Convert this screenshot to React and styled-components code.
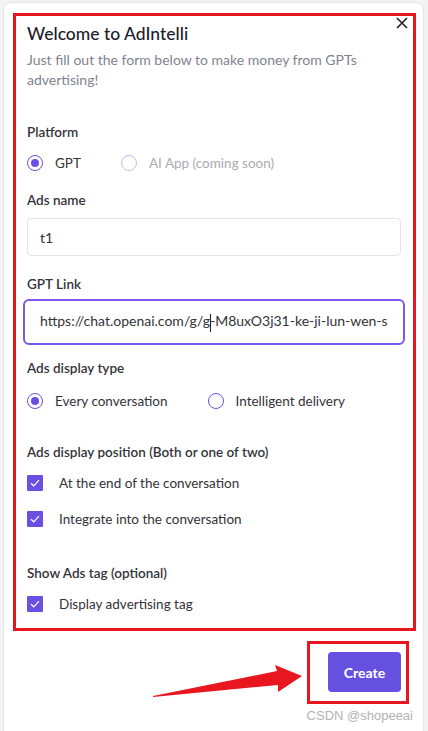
import React from 'react'
import styled, { createGlobalStyle } from 'styled-components'

const Global = createGlobalStyle`
  body{ margin:0; background:#f3f3f4; font-family: Lato, "Liberation Sans", sans-serif; }
`

const PURPLE = '#6a4fe3'
const RED = '#e8161e'

const Card = styled.div`
  margin:2px 4px 0 3px;
  min-height:740px;
  background:#fff;
  border:1px solid #e6e6e8;
  border-radius:8px;
  padding:10px 7px 0 9px;
  box-sizing:border-box;
`

const Marked = styled.div`
  position:relative;
  border:3px solid ${RED};
  padding:4px 12px 14px 11px;
`

const Close = styled.button`
  position:absolute;top:1px;right:3px;
  border:none;background:none;padding:0;cursor:pointer;
  width:14px;height:14px;display:flex;
`

const Title = styled.h1`
  margin:0 0 2px;font-size:17.5px;line-height:28px;font-weight:500;color:#1c1c2b;
`
const Sub = styled.p`
  margin:0 0 32px;font-size:14px;line-height:20px;color:#80838f;
`

const Label = styled.div`
  font-size:13.5px;line-height:20px;font-weight:600;color:#34343a;
  margin-top:${p=>p.$top||0}px;
`

const Row = styled.div`
  display:flex;align-items:center;gap:40px;
  margin-top:${p=>p.$top||11}px;
`

const Option = styled.label`
  display:flex;align-items:center;gap:12px;
  font-size:13.5px;line-height:20px;
  color:${p=>p.$disabled?'#ababb0':'#333338'};
`

const Radio = styled.span`
  width:16px;height:16px;border-radius:50%;box-sizing:border-box;
  border:1.5px solid ${p=>p.$disabled?'#c9b8f7':PURPLE};
  display:flex;align-items:center;justify-content:center;
  &::after{
    content:'';width:8px;height:8px;border-radius:50%;
    background:${p=>p.$on?PURPLE:'transparent'};
  }
`

const Input = styled.div`
  margin-top:8px;height:38px;box-sizing:border-box;
  border:1px solid #e4e4e7;border-radius:4px;
  padding:0 12px;display:flex;align-items:center;
  font-size:14px;color:#333338;
`

const FocusInput = styled.div`
  margin:5px -4px 0;height:46px;box-sizing:border-box;
  border:2px solid #7a58f0;border-radius:6px;
  padding:0 15px;display:flex;align-items:center;
  font-size:14px;color:#333338;
`

const Clip = styled.span`
  flex:1;white-space:nowrap;overflow:hidden;
`

const Caret = styled.span`
  display:inline-block;width:1px;height:18px;background:#222;
  vertical-align:middle;margin:0 -1px 0 0;
`

const Check = styled.span`
  width:16px;height:16px;background:${PURPLE};border-radius:1px;
  display:flex;align-items:center;justify-content:center;flex:none;
`

const CheckRow = styled.label`
  display:flex;align-items:center;gap:16px;
  font-size:13.5px;line-height:20px;color:#333338;
  margin-top:${p=>p.$top||11}px;
`

const Footer = styled.div`
  display:flex;justify-content:flex-end;align-items:stretch;
  margin-top:10px;padding-right:7px;
`

const ButtonMark = styled.div`
  border:3px solid ${RED};
  padding:8px 5px 9px 18px;
`

const Create = styled.button`
  width:73px;height:40px;border:none;border-radius:4px;
  background:#6650e0;color:#fff;font-family:inherit;
  font-size:14px;font-weight:700;cursor:pointer;
`

const Watermark = styled.div`
  text-align:right;font-family:"Liberation Sans", sans-serif;
  font-size:13px;line-height:18px;color:#b3b3b3;margin-top:3px;padding-right:3px;
`

const Arrow = () => (
  <svg width="150" height="63" viewBox="0 0 150 63" style={{marginRight:4}}>
    <polygon points="0,55 124,30 122,24 149,35 125,51 125,44 0,56" fill={RED}/>
  </svg>
)

const Tick = () => (
  <svg width="10" height="8" viewBox="0 0 10 8">
    <path d="M1 4.2 L3.8 6.8 L9 1.2" fill="none" stroke="#fff" strokeWidth="1.2"/>
  </svg>
)

export default function App(){
  return (
    <>
      <Global/>
      <Card>
        <Marked>
          <Close aria-label="close">
            <svg width="12" height="12" viewBox="0 0 12 12">
              <path d="M1 1L11 11M11 1L1 11" stroke="#1f1f2a" strokeWidth="1.6"/>
            </svg>
          </Close>
          <Title>Welcome to AdIntelli</Title>
          <Sub>Just fill out the form below to make money from GPTs advertising!</Sub>

          <Label>Platform</Label>
          <Row>
            <Option><Radio $on/>GPT</Option>
            <Option $disabled><Radio $disabled/>AI App (coming soon)</Option>
          </Row>

          <Label $top={17}>Ads name</Label>
          <Input>t1</Input>

          <Label $top={18}>GPT Link</Label>
          <FocusInput>
            <Clip>https://chat.openai.com/g/g<Caret/>-M8uxO3j31-ke-ji-lun-wen-shu-xie</Clip>
          </FocusInput>

          <Label $top={13}>Ads display type</Label>
          <Row $top={13}>
            <Option><Radio $on/>Every conversation</Option>
            <Option><Radio/>Intelligent delivery</Option>
          </Row>

          <Label $top={31}>Ads display position (Both or one of two)</Label>
          <CheckRow><Check><Tick/></Check>At the end of the conversation</CheckRow>
          <CheckRow $top={16}><Check><Tick/></Check>Integrate into the conversation</CheckRow>

          <Label $top={34}>Show Ads tag (optional)</Label>
          <CheckRow><Check><Tick/></Check>Display advertising tag</CheckRow>
        </Marked>

        <Footer>
          <Arrow/>
          <ButtonMark><Create>Create</Create></ButtonMark>
        </Footer>
        <Watermark>CSDN @shopeeai</Watermark>
      </Card>
    </>
  )
}
